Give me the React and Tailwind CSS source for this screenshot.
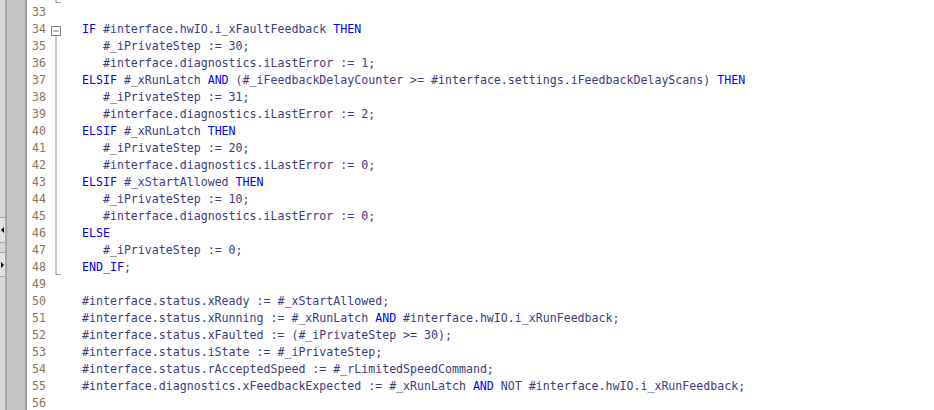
import React from 'react'

const KEYWORDS = new Set(['IF', 'THEN', 'ELSIF', 'AND', 'ELSE', 'END_IF'])

const LINES = [
  [32, ''],
  [33, ''],
  [34, 'IF #interface.hwIO.i_xFaultFeedback THEN'],
  [35, '   #_iPrivateStep := 30;'],
  [36, '   #interface.diagnostics.iLastError := 1;'],
  [37, 'ELSIF #_xRunLatch AND (#_iFeedbackDelayCounter >= #interface.settings.iFeedbackDelayScans) THEN'],
  [38, '   #_iPrivateStep := 31;'],
  [39, '   #interface.diagnostics.iLastError := 2;'],
  [40, 'ELSIF #_xRunLatch THEN'],
  [41, '   #_iPrivateStep := 20;'],
  [42, '   #interface.diagnostics.iLastError := 0;'],
  [43, 'ELSIF #_xStartAllowed THEN'],
  [44, '   #_iPrivateStep := 10;'],
  [45, '   #interface.diagnostics.iLastError := 0;'],
  [46, 'ELSE'],
  [47, '   #_iPrivateStep := 0;'],
  [48, 'END_IF;'],
  [49, ''],
  [50, '#interface.status.xReady := #_xStartAllowed;'],
  [51, '#interface.status.xRunning := #_xRunLatch AND #interface.hwIO.i_xRunFeedback;'],
  [52, '#interface.status.xFaulted := (#_iPrivateStep >= 30);'],
  [53, '#interface.status.iState := #_iPrivateStep;'],
  [54, '#interface.status.rAcceptedSpeed := #_rLimitedSpeedCommand;'],
  [55, '#interface.diagnostics.xFeedbackExpected := #_xRunLatch AND NOT #interface.hwIO.i_xRunFeedback;'],
  [56, ''],
]

function Code({ text }) {
  // split on word boundaries, keep separators
  const parts = text.split(/([A-Za-z_#][A-Za-z0-9_#.]*)/)
  return parts.map((p, i) =>
    KEYWORDS.has(p) ? (
      <span key={i} className="text-[#0000ff]">{p}</span>
    ) : (
      <span key={i}>{p}</span>
    )
  )
}

function Fold({ n }) {
  if (n === 34) {
    return (
      <svg width="36" height="17" className="block">
        <rect x="5.5" y="5.5" width="9" height="9" fill="white" stroke="#808080" />
        <line x1="7.5" y1="10" x2="12.5" y2="10" stroke="#606060" />
        <line x1="10" y1="14.5" x2="10" y2="17" stroke="#909090" />
      </svg>
    )
  }
  if (n > 34 && n < 48) {
    return (
      <svg width="36" height="17" className="block">
        <line x1="10" y1="0" x2="10" y2="17" stroke="#909090" />
      </svg>
    )
  }
  if (n === 48 || n === 32) {
    return (
      <svg width="36" height="17" className="block">
        <polyline points="10,0 10,15.5 15,15.5" fill="none" stroke="#909090" />
      </svg>
    )
  }
  return null
}

export default function App() {
  return (
    <div className="w-[934px] h-[410px] overflow-hidden bg-white flex font-['DejaVu_Sans_Mono',monospace] text-[11.6px]">
      {/* collapsed side panel */}
      <div className="w-[7px] shrink-0 bg-[#d8d8d8] border-r-2 border-[#a8a8a8] flex flex-col">
        <div className="h-[217px]" />
        <div className="h-[25px] border-t border-[#a8a8a8] bg-[#e2e2e2] flex items-center justify-center">
          <div className="w-0 h-0 border-y-[3px] border-y-transparent border-r-[3px] border-r-black" />
        </div>
        <div className="h-[10px] border-t border-[#a8a8a8]" />
        <div className="h-[25px] border-t border-b border-[#a8a8a8] bg-[#e2e2e2] flex items-center justify-center">
          <div className="w-0 h-0 border-y-[3px] border-y-transparent border-l-[3px] border-l-black" />
        </div>
      </div>
      <div className="w-[20px] shrink-0 bg-[#c4c4c4] border-r-2 border-[#9a9a9a]" />

      <div className="flex-1 flex flex-col mt-[-13px]">
        {LINES.map(([n, text]) => (
          <div key={n} className="h-[17px] flex items-center leading-[17px]">
            <div className="w-[19px] shrink-0 text-right text-[#8d7456]">{n === 32 ? '' : n}</div>
            <div className="w-[36px] h-[17px] shrink-0">
              <Fold n={n} />
            </div>
            <div className="whitespace-pre text-[#3c3c80]">
              <Code text={text} />
            </div>
          </div>
        ))}
      </div>
    </div>
  )
}
